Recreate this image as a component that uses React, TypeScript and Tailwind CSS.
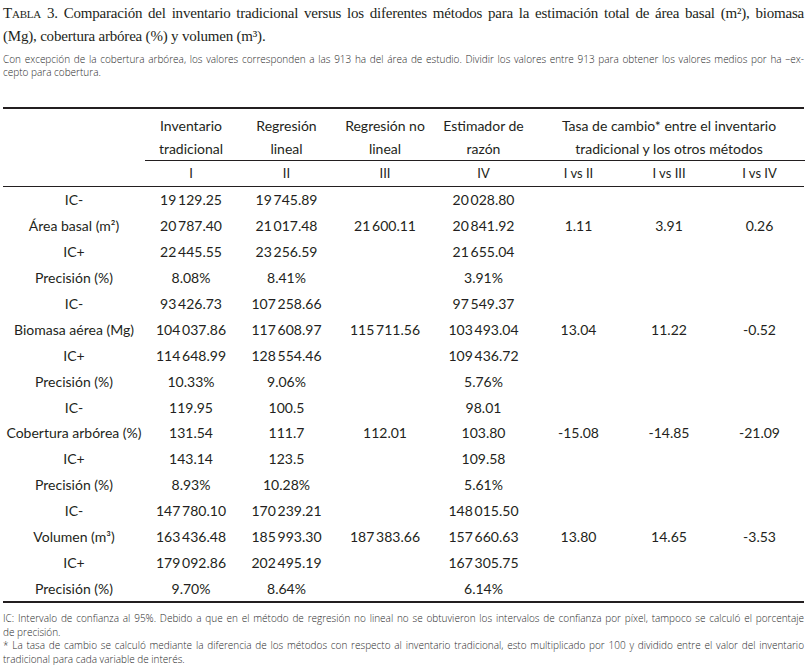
import React from 'react';

const T = '\u2009';

interface Row {
  label: string;
  values: string[];
}

const groups: Row[][] = [
  [
    { label: 'IC-', values: [`19${T}129.25`, `19${T}745.89`, '', `20${T}028.80`, '', '', ''] },
    { label: 'Área basal (m²)', values: [`20${T}787.40`, `21${T}017.48`, `21${T}600.11`, `20${T}841.92`, '1.11', '3.91', '0.26'] },
    { label: 'IC+', values: [`22${T}445.55`, `23${T}256.59`, '', `21${T}655.04`, '', '', ''] },
    { label: 'Precisión (%)', values: ['8.08%', '8.41%', '', '3.91%', '', '', ''] },
  ],
  [
    { label: 'IC-', values: [`93${T}426.73`, `107${T}258.66`, '', `97${T}549.37`, '', '', ''] },
    { label: 'Biomasa aérea (Mg)', values: [`104${T}037.86`, `117${T}608.97`, `115${T}711.56`, `103${T}493.04`, '13.04', '11.22', '-0.52'] },
    { label: 'IC+', values: [`114${T}648.99`, `128${T}554.46`, '', `109${T}436.72`, '', '', ''] },
    { label: 'Precisión (%)', values: ['10.33%', '9.06%', '', '5.76%', '', '', ''] },
  ],
  [
    { label: 'IC-', values: ['119.95', '100.5', '', '98.01', '', '', ''] },
    { label: 'Cobertura arbórea (%)', values: ['131.54', '111.7', '112.01', '103.80', '-15.08', '-14.85', '-21.09'] },
    { label: 'IC+', values: ['143.14', '123.5', '', '109.58', '', '', ''] },
    { label: 'Precisión (%)', values: ['8.93%', '10.28%', '', '5.61%', '', '', ''] },
  ],
  [
    { label: 'IC-', values: [`147${T}780.10`, `170${T}239.21`, '', `148${T}015.50`, '', '', ''] },
    { label: 'Volumen (m³)', values: [`163${T}436.48`, `185${T}993.30`, `187${T}383.66`, `157${T}660.63`, '13.80', '14.65', '-3.53'] },
    { label: 'IC+', values: [`179${T}092.86`, `202${T}495.19`, '', `167${T}305.75`, '', '', ''] },
    { label: 'Precisión (%)', values: ['9.70%', '8.64%', '', '6.14%', '', '', ''] },
  ],
];

const cols = 'grid grid-cols-[142px_92px_99px_98px_99px_91px_90px_91px]';

const App: React.FC = () => {
  const rows = groups.flat();

  return (
    <div className="w-[807px] h-[665px] bg-white text-[#231f20] px-[3px] pt-[2px] overflow-hidden">
      {/* Title */}
      <div className="font-['Liberation_Serif',serif] text-[15px] leading-[23px] tracking-[-0.2px]">
        <p className="whitespace-nowrap text-justify [text-align-last:justify]">
          <span className="[font-variant-caps:small-caps]">Tabla</span> 3. Comparación del inventario tradicional versus los diferentes métodos para la estimación total de área basal (m²), biomasa
        </p>
        <p>(Mg), cobertura arbórea (%) y volumen (m³).</p>
      </div>

      {/* Note */}
      <div className="mt-[5px] font-['Open_Sans',sans-serif] font-light text-[10px] leading-[13px] text-[#2a2a2a]">
        <p className="text-justify [text-align-last:justify]">
          Con excepción de la cobertura arbórea, los valores corresponden a las 913 ha del área de estudio. Dividir los valores entre 913 para obtener los valores medios por ha –ex-
        </p>
        <p>cepto para cobertura.</p>
      </div>

      {/* Table */}
      <div className="mt-[28px] font-['Lato',sans-serif] text-[14px] border-t-2 border-[#231f20]">
        <div className={cols}>
          <div />
          <div className="border-b border-[#231f20] text-center leading-[23px] pt-[5px]">Inventario<br />tradicional</div>
          <div className="border-b border-[#231f20] text-center leading-[23px] pt-[5px]">Regresión<br />lineal</div>
          <div className="border-b border-[#231f20] text-center leading-[23px] pt-[5px]">Regresión no<br />lineal</div>
          <div className="border-b border-[#231f20] text-center leading-[23px] pt-[5px]">Estimador de<br />razón</div>
          <div className="col-span-3 border-b border-[#231f20] text-center leading-[23px] pt-[5px]">
            Tasa de cambio* entre el inventario<br />tradicional y los otros métodos
          </div>
        </div>
        <div className={`${cols} h-[26px] items-center text-center text-[13px] border-b border-[#231f20]`}>
          <div />
          <div>I</div>
          <div>II</div>
          <div>III</div>
          <div>IV</div>
          <div>I vs II</div>
          <div>I vs III</div>
          <div>I vs IV</div>
        </div>

        <div className="border-b-2 border-[#231f20]">
          {rows.map((row, i) => (
            <div key={i} className={`${cols} h-[25.9px] items-center text-center`}>
              <div>{row.label}</div>
              {row.values.map((v, j) => (
                <div key={j}>{v}</div>
              ))}
            </div>
          ))}
        </div>
      </div>

      {/* Footnotes */}
      <div className="mt-[9px] font-['Open_Sans',sans-serif] font-light text-[10px] leading-[13.5px] text-[#2a2a2a]">
        <p className="text-justify [text-align-last:justify]">
          IC: Intervalo de confianza al 95%. Debido a que en el método de regresión no lineal no se obtuvieron los intervalos de confianza por píxel, tampoco se calculó el porcentaje
        </p>
        <p>de precisión.</p>
        <p className="text-justify [text-align-last:justify]">
          * La tasa de cambio se calculó mediante la diferencia de los métodos con respecto al inventario tradicional, esto multiplicado por 100 y dividido entre el valor del inventario
        </p>
        <p>tradicional para cada variable de interés.</p>
      </div>
    </div>
  );
};

export default App;
